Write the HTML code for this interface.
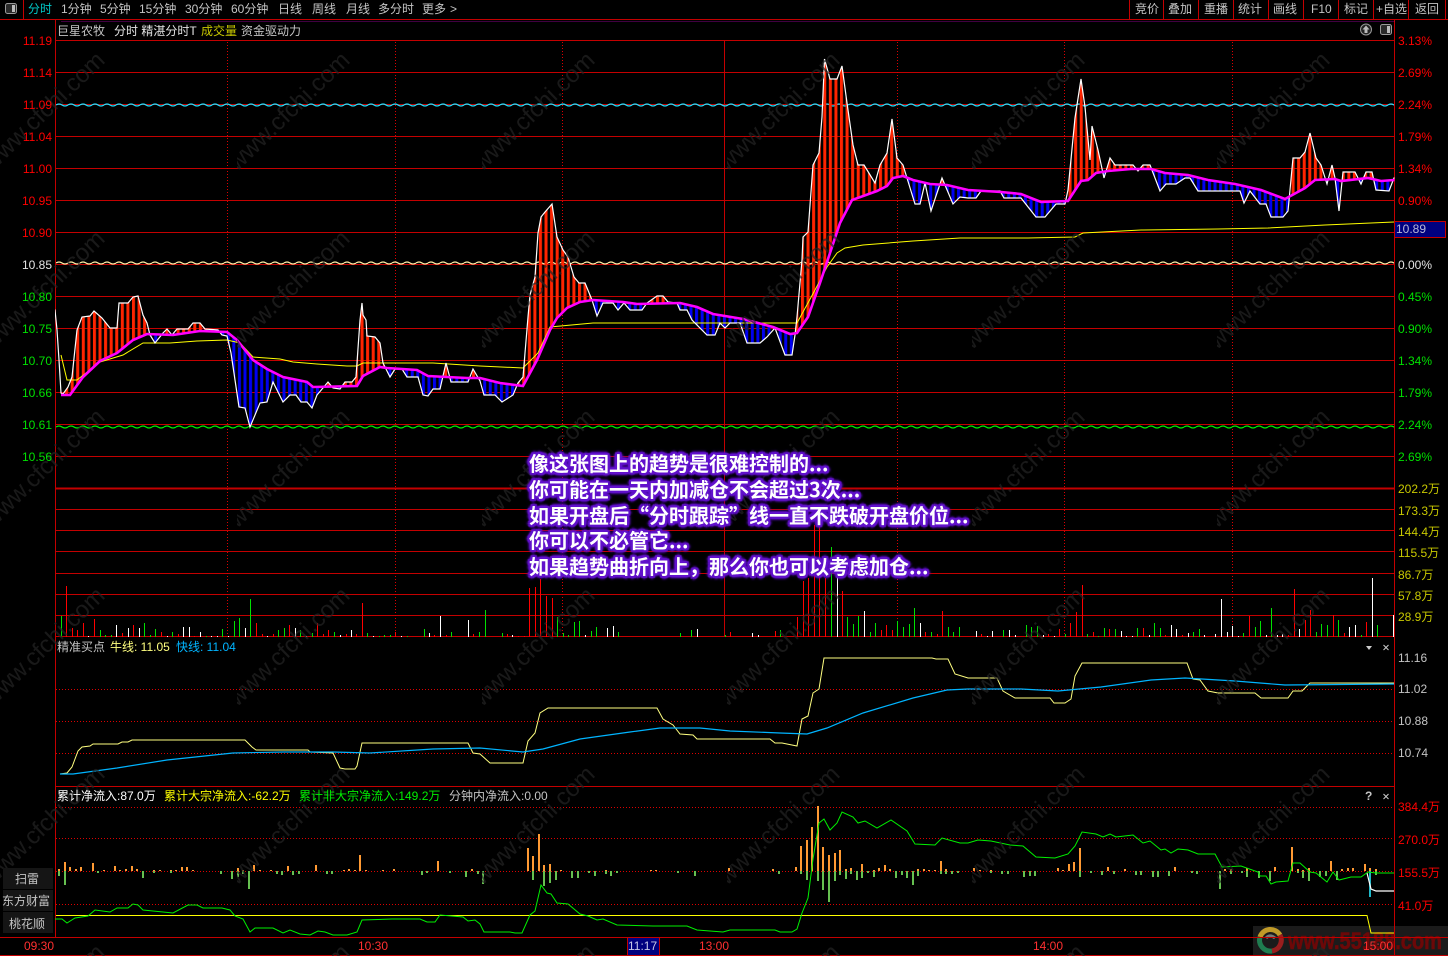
<!DOCTYPE html>
<html lang="zh">
<head>
<meta charset="utf-8">
<title>分时</title>
<style>
html,body{margin:0;padding:0;background:#000;width:1448px;height:956px;overflow:hidden}
svg{position:absolute;left:0;top:0}
text{font-family:"Liberation Sans","WenQuanYi Zen Hei","Noto Sans CJK SC",sans-serif;font-size:12px;white-space:pre}
.g{fill:#c4c4c4}.r{fill:#f00}.gr{fill:#00e000}.y{fill:#c8c800}.w{fill:#e4e4e4}
.ov{position:absolute;left:529px;font:bold 20px/26px "Noto Sans CJK SC","WenQuanYi Zen Hei",sans-serif;color:#fff;white-space:pre;
text-shadow:2px 0 1px #6212cc,-2px 0 1px #6212cc,0 2px 1px #6212cc,0 -2px 1px #6212cc,2px 2px 1px #6212cc,-2px 2px 1px #6212cc,2px -2px 1px #6212cc,-2px -2px 1px #6212cc,3px 0 2px #5a10c0,-3px 0 2px #5a10c0,0 3px 2px #5a10c0,0 -3px 2px #5a10c0,0 0 6px #5a10c0}
</style>
</head>
<body>
<svg width="1448" height="956" viewBox="0 0 1448 956" xmlns="http://www.w3.org/2000/svg">
<defs>
<pattern id="red" patternUnits="userSpaceOnUse" x="59.5" y="0" width="5.575" height="10"><rect width="3" height="10" fill="#ff2400"/></pattern>
<pattern id="blue" patternUnits="userSpaceOnUse" x="59.5" y="0" width="5.575" height="10"><rect width="3" height="10" fill="#0000f0"/></pattern>
<pattern id="wc" patternUnits="userSpaceOnUse" x="56" y="102" width="12" height="6"><path d="M0 3Q3 1 6 3T12 3" fill="none" stroke="#20e0ff" stroke-width="1.3"/></pattern>
<pattern id="wy" patternUnits="userSpaceOnUse" x="56" y="260" width="12" height="6"><path d="M0 3Q3 1 6 3T12 3" fill="none" stroke="#fff0a8" stroke-width="1.3"/></pattern>
<pattern id="wg" patternUnits="userSpaceOnUse" x="56" y="424" width="12" height="6"><path d="M0 3Q3 1 6 3T12 3" fill="none" stroke="#00f000" stroke-width="1.3"/></pattern>
<pattern id="wm" patternUnits="userSpaceOnUse" x="-8" y="-3" width="245" height="178.5">
<text x="0" y="175" transform="rotate(-44 0 175)" style="font-size:24px" fill="#242424">www.cfchi.com</text>
</pattern>
<path id="pP" d="M50 20L50 305L55 310L56 320L57 330L59 360L61 393L63 394L68 387L72 377L77 330L82 317L90 316L94 311L102 318L110 328L117 328L119 303L128 303L133 297L138 296L143 315L147 323L150 335L155 343L163 333L167 329L172 335L177 329L188 329L193 323L200 323L205 329L218 330L222 335L227 336L231 353L239 407L245 408L250 427L260 403L267 402L273 382L283 402L290 395L296 395L301 402L307 402L312 408L317 395L328 382L333 388L340 389L345 382L352 382L356 377L360 320L362 303L363 315L366 320L367 336L375 337L380 343L383 363L390 377L395 369L402 369L407 377L418 377L423 395L428 396L433 389L440 389L446 363L451 382L468 382L473 369L480 381L484 395L495 395L502 402L513 395L518 383L523 377L525 353L528 317L530 295L535 277L538 233L541 217L545 212L552 204L557 237L563 250L568 257L574 277L579 283L585 283L592 300L597 316L603 303L613 303L618 310L624 303L630 310L642 310L647 303L657 296L663 296L668 302L677 303L680 310L687 310L692 320L707 335L715 335L720 323L725 328L730 323L740 323L747 343L760 343L767 337L775 328L785 355L792 355L795 335L797 317L802 260L803 237L808 232L813 165L819 153L822 117L824.5 59L830 79L837 79L842 66L847 103L853 145L858 165L864 165L875 183L880 165L887 153L892 119L897 158L903 165L915 204L920 204L925 183L931 211L942 178L953 204L960 197L968 198L976 198L981 191L1000 191L1004 198L1021 198L1036 217L1045 217L1056 204L1065 204L1068 190L1075 118L1081 79L1085 107L1090 160L1092 126L1098 150L1104 178L1110 158L1115 165L1133 165L1138 171L1143 165L1150 165L1160 191L1166 184L1176 184L1185 178L1190 178L1198 191L1240 191L1244 203L1250 191L1260 204L1266 204L1271 217L1283 217L1288 211L1290 190L1293 158L1300 158L1305 152L1310 133L1316 158L1321 165L1327 184L1332 165L1335 178L1339 211L1343 172L1355 172L1361 184L1366 172L1372 172L1376 190L1389 191L1394 178L1400 178L1400 20Z"/>
<path id="pA" d="M50 20L50 395L61 395L70 395L83 377L100 361L117 353L133 340L147 334L173 335L200 331L227 332L237 340L253 360L267 369L283 377L307 382L313 387L357 386L363 376L380 367L387 368L417 370L428 376L447 377L467 378L480 378L500 383L523 386L537 360L550 330L557 318L567 308L580 302L593 300L623 302L637 304L680 303L697 307L713 314L743 319L773 327L790 334L797 333L808 317L820 283L840 223L852 200L877 191L887 186L893 178L903 176L913 180L930 184L947 185L968 190L1001 192L1021 194L1041 202L1068 201L1081 181L1088 180L1096 173L1108 171L1131 169L1151 169L1165 173L1188 175L1208 180L1235 184L1261 190L1285 199L1305 188L1315 180L1335 179L1341 181L1368 178L1381 181L1394 180L1400 180L1400 20Z"/>
<mask id="aboveP" maskUnits="userSpaceOnUse" x="0" y="0" width="1448" height="956"><use href="#pP" fill="#fff"/></mask>
<mask id="belowP" maskUnits="userSpaceOnUse" x="0" y="0" width="1448" height="956"><rect width="1448" height="956" fill="#fff"/><use href="#pP" fill="#000"/></mask>
<mask id="aboveA" maskUnits="userSpaceOnUse" x="0" y="0" width="1448" height="956"><use href="#pA" fill="#fff"/></mask>
<mask id="belowA" maskUnits="userSpaceOnUse" x="0" y="0" width="1448" height="956"><rect width="1448" height="956" fill="#fff"/><use href="#pA" fill="#000"/></mask>
<clipPath id="cP"><rect x="55" y="21" width="1339.5" height="640"/></clipPath>
<clipPath id="cA"><rect x="61" y="21" width="1333.5" height="640"/></clipPath>
</defs>

<rect width="1448" height="956" fill="#000"/>

<!-- logo backdrop -->
<rect x="1253" y="926" width="195" height="30" fill="#1b1b1b"/>
<text x="1288" y="949" style="font-size:24px;font-weight:bold;font-family:'Liberation Sans',sans-serif" fill="#6c0808" stroke="#6c0808" stroke-width=".6" textLength="154" lengthAdjust="spacingAndGlyphs">www.55188.com</text>
<g fill="none" stroke-width="5">
<path d="M1260 937A11 11 0 0 1 1280 935" stroke="#c09a28"/>
<path d="M1280 935A11 11 0 0 1 1272 951" stroke="#9a1e1e"/>
<path d="M1272 951A11 11 0 0 1 1260 937" stroke="#1f7d50"/>
<path d="M1266 938Q1270 934 1275 938" stroke="#777" stroke-width="3"/>
</g>

<!-- frame and grid -->
<g shape-rendering="crispEdges" fill="none" stroke="#c40000">
<path d="M0 19.5H1448M23.5 0V19M1129.5 0V19M1163.5 0V19M1198.5 0V19M1233.5 0V19M1268.5 0V19M1303.5 0V19M1338.5 0V19M1373.5 0V19M1408.5 0V19M1445.5 0V19"/>
<path d="M55.5 20V937.5M1394.5 20V956M0 937.5H1448M0 955.5H1448M55 786.5H1394"/>
<path d="M56 40.5H1394M56 72.5H1394M56 104.5H1394M56 136.5H1394M56 168.5H1394M56 200.5H1394M56 232.5H1394M56 264.5H1394M56 296.5H1394M56 328.5H1394M56 360.5H1394M56 392.5H1394M56 424.5H1394M56 456.5H1394M56 509.5H1394M56 530.5H1394M56 551.5H1394M56 573.5H1394M56 594.5H1394M56 615.5H1394M56 636.5H1394"/>
<path d="M56 488.5H1394" stroke-width="2"/>
<path d="M724.5 40V637"/>
<path stroke="#dc0000" stroke-dasharray="1 2" d="M227.5 42V636M395.5 42V636M562.5 42V636M897.5 42V636M1064.5 42V636M1232.5 42V636"/>
<path stroke="#dc0000" stroke-dasharray="1 2" d="M56 689.5H1394M56 721.5H1394M56 753.5H1394M56 807.5H1394M56 838.5H1394M56 871.5H1394M56 904.5H1394"/>
</g>
<rect x="56" y="102" width="1338" height="6" fill="url(#wc)"/>
<rect x="56" y="260" width="1338" height="6" fill="url(#wy)"/>
<rect x="56" y="424" width="1338" height="6" fill="url(#wg)"/>

<!-- stripes between price and average -->
<g clip-path="url(#cA)">
<g mask="url(#belowP)"><rect x="55" y="20" width="1340" height="600" fill="url(#red)" mask="url(#aboveA)"/></g>
<g mask="url(#aboveP)"><rect x="55" y="20" width="1340" height="600" fill="url(#blue)" mask="url(#belowA)"/></g>
</g>

<!-- volume bars -->
<g shape-rendering="crispEdges" fill="none" transform="translate(.5 0)">
<path stroke="#f00" d="M66 586V637M72 628V637M77 630V637M83 623V637M94 619V637M122 633V637M133 625V637M161 632V637M178 634V637M194 636V637M256 623V637M262 634V637M273 634V637M289 625V637M317 623V637M323 634V637M328 630V637M346 634V637M356 634V637M362 603V637M395 632V637M434 635V637M446 635V637M473 634V637M507 634V637M518 636V637M524 636V637M529 588V637M535 587V637M540 579V637M546 596V637M552 598V637M730 632V637M775 631V637M797 617V637M803 581V637M808 578V637M814 525V637M819 527V637M825 578V637M842 591V637M881 630V637M886 625V637M892 630V637M925 632V637M937 634V637M942 611V637M981 634V637M1048 634V637M1059 629V637M1070 623V637M1076 612V637M1082 585V637M1093 632V637M1109 629V637M1143 628V637M1165 635V637M1182 635V637M1249 616V637M1288 635V637M1294 589V637M1305 620V637M1310 610V637M1333 615V637M1344 633V637M1366 622V637"/>
<path stroke="#00e000" d="M61 616V637M100 630V637M105 635V637M111 635V637M144 623V637M150 635V637M155 629V637M172 632V637M206 636V637M222 629V637M234 621V637M239 618V637M250 599V637M278 630V637M284 628V637M300 630V637M312 633V637M334 632V637M367 633V637M379 636V637M384 635V637M390 635V637M407 636V637M424 629V637M451 632V637M479 632V637M485 610V637M502 633V637M557 617V637M563 633V637M568 635V637M574 622V637M579 621V637M591 631V637M596 627V637M618 632V637M680 633V637M691 630V637M725 635V637M780 630V637M831 547V637M847 617V637M853 624V637M858 616V637M870 632V637M875 623V637M897 621V637M903 627V637M909 624V637M914 608V637M931 632V637M948 627V637M953 632V637M959 627V637M1003 630V637M1026 625V637M1031 627V637M1037 626V637M1065 634V637M1087 634V637M1098 636V637M1104 628V637M1115 629V637M1137 628V637M1154 623V637M1160 628V637M1193 632V637M1199 629V637M1243 633V637M1255 627V637M1260 621V637M1271 608V637M1316 632V637M1321 624V637M1327 625V637M1338 620V637M1361 635V637M1377 625V637"/>
<path stroke="#fff" d="M88 636V637M116 625V637M128 628V637M139 628V637M167 636V637M183 627V637M189 627V637M200 632V637M211 636V637M217 636V637M228 636V637M245 628V637M267 636V637M295 628V637M306 636V637M340 635V637M351 630V637M373 636V637M401 636V637M429 633V637M440 616V637M468 620V637M512 635V637M585 635V637M607 628V637M613 626V637M697 629V637M752 633V637M758 635V637M837 577V637M864 611V637M920 623V637M976 631V637M987 636V637M992 631V637M1009 630V637M1015 635V637M1043 635V637M1054 636V637M1121 631V637M1126 636V637M1132 636V637M1149 635V637M1171 625V637M1176 629V637M1188 633V637M1204 635V637M1215 634V637M1221 599V637M1227 632V637M1232 626V637M1238 636V637M1266 635V637M1277 635V637M1282 634V637M1299 629V637M1349 627V637M1355 625V637M1372 578V637M1393 615V637"/>
</g>

<!-- average-price (yellow) line -->
<polyline fill="none" stroke="#ffff00" stroke-width="1" points="61,355 67,380 77,380 100,362 123,355 143,343 170,343 197,341 227,340 240,343 253,357 280,359 293,362 317,364 347,366 357,366 363,363 433,363 480,366 523,368 538,353 550,327 593,323 797,323 815,290 827,267 837,253 845,248 863,245 913,241 960,238 1028,238 1075,237 1083,233 1141,230 1218,229 1268,228 1325,225 1394,222"/>
<!-- price and average lines -->
<use href="#pP" fill="none" stroke="#fff" stroke-width="1.2" clip-path="url(#cP)"/>
<use href="#pA" fill="none" stroke="#ff00ff" stroke-width="2.6" clip-path="url(#cA)"/>

<!-- panel 2 -->
<polyline fill="none" stroke="#ffff80" stroke-width="1" points="60,774 67,773 72,767 78,751 82,747 90,746 93,744 118,744 122,742 128,742 132,740 245,740 252,747 256,750 308,750 310,752 333,753 340,768 345,769 355,769 357,766 362,743 468,743 473,753 480,754 490,763 523,763 528,741 535,733 540,713 548,708 657,708 663,719 673,725 680,734 693,735 697,739 770,739 775,743 782,743 797,746 802,719 808,716 813,693 819,689 824,658 932,658 936,659 948,659 955,674 968,678 997,678 1003,691 1015,698 1050,698 1054,703 1065,703 1071,699 1075,676 1082,663 1187,663 1193,679 1200,680 1208,691 1218,693 1255,693 1261,698 1288,698 1293,691 1302,691 1310,683 1394,683"/>
<polyline fill="none" stroke="#00b4ff" stroke-width="1.2" points="60,774 73,774 117,768 167,760 233,753 283,752 333,752 370,753 433,749 480,748 523,752 543,749 580,739 630,732 660,728 700,728 730,731 780,733 807,734 827,728 863,713 913,698 947,690 968,689 1021,689 1058,691 1101,687 1151,680 1185,678 1235,681 1285,685 1394,684"/>

<!-- panel 3 bars -->
<g shape-rendering="crispEdges" fill="none" stroke-width="2">
<path stroke="#ff9a33" d="M59 869V871M65 862V871M70 867V871M76 869V871M81 867V871M93 863V871M104 870V871M115 866V871M120 870V871M126 869V871M132 866V871M137 869V871M154 870V871M160 870V871M171 870V871M176 870V871M182 867V871M187 867V871M193 870V871M238 868V871M243 870V871M254 865V871M260 870V871M271 870V871M288 866V871M316 865V871M344 870V871M349 869V871M355 870V871M360 855V871M366 870V871M383 870V871M394 869V871M438 861V871M472 869V871M528 848V871M533 856V871M539 834V871M544 865V871M550 864V871M561 870V871M606 870V871M651 870V871M656 870V871M729 868V871M773 869V871M796 867V871M801 846V871M807 840V871M812 827V871M818 806V871M823 847V871M829 855V871M835 853V871M840 850V871M846 869V871M851 868V871M862 864V871M874 870V871M879 868V871M885 865V871M890 869V871M918 869V871M924 869V871M929 870V871M935 870V871M941 861V871M946 869V871M974 868V871M980 870V871M991 870V871M1058 868V871M1063 870V871M1069 864V871M1074 862V871M1080 848V871M1108 867V871M1125 869V871M1175 867V871M1225 869V871M1231 869V871M1247 868V871M1275 867V871M1292 847V871M1298 869V871M1303 870V871M1309 868V871M1331 861V871M1342 869V871M1348 868V871M1353 868V871M1365 864V871M1370 868V871M1376 869V871"/>
<path stroke="#66c050" d="M59 871V876M65 871V885M98 871V873M143 871V878M154 871V873M171 871V873M221 871V874M232 871V879M238 871V877M243 871V874M249 871V889M277 871V874M282 871V875M293 871V875M299 871V874M327 871V874M332 871V874M422 871V875M427 871V873M450 871V873M466 871V877M478 871V874M483 871V884M533 871V880M544 871V886M550 871V883M556 871V880M572 871V878M578 871V878M589 871V873M595 871V876M606 871V874M611 871V876M617 871V873M678 871V873M695 871V876M779 871V874M801 871V874M807 871V880M818 871V881M823 871V890M829 871V902M835 871V881M840 871V875M846 871V879M851 871V874M857 871V880M862 871V878M868 871V873M874 871V877M896 871V878M902 871V875M907 871V878M913 871V885M918 871V876M941 871V874M946 871V874M952 871V874M958 871V873M991 871V873M1002 871V874M1008 871V874M1024 871V877M1030 871V876M1035 871V876M1080 871V877M1091 871V873M1102 871V875M1114 871V874M1136 871V875M1141 871V875M1153 871V877M1158 871V877M1169 871V876M1192 871V873M1197 871V874M1220 871V889M1231 871V874M1242 871V873M1247 871V877M1259 871V878M1270 871V881M1298 871V873M1303 871V878M1309 871V881M1320 871V877M1326 871V876M1337 871V880M1376 871V875"/>
<path stroke="#20b8c8" d="M1370 871V897"/>
</g>
<polyline fill="none" stroke="#ffff00" points="56,915.5 1367,915.5 1371,933 1394,933"/>
<polyline fill="none" stroke="#fff" stroke-width="1.2" points="1367,873 1371,889 1376,891 1394,891"/>
<polyline fill="none" stroke="#00f000" stroke-width="1" points="55,919 62,919 67,923 75,918 88,916 95,910 110,912 117,908 128,908 133,904 138,905 143,910 153,911 173,913 188,905 197,905 203,908 222,908 230,910 235,916 243,919 250,932 255,928 273,928 283,933 290,930 300,934 310,935 318,931 325,932 333,935 347,935 357,932 362,920 392,919 420,919 427,922 435,922 440,915 463,917 468,921 475,920 480,924 484,932 510,932 515,933 522,933 530,915 535,911 541,885 547,893 551,894 557,903 568,904 580,914 588,916 597,920 603,919 617,925 653,926 687,926 697,930 723,932 730,930 775,930 780,932 792,932 797,929 802,913 808,898 813,859 819,823 824,819 830,830 837,823 842,812 853,817 858,823 865,821 877,828 891,820 907,831 915,844 935,845 942,838 960,843 968,843 978,840 991,841 1010,845 1023,846 1036,857 1055,858 1068,854 1075,846 1082,832 1096,834 1103,837 1110,834 1116,837 1133,835 1143,843 1150,841 1161,850 1165,849 1171,853 1178,849 1188,850 1198,854 1215,854 1222,867 1241,866 1258,872 1260,876 1266,876 1271,884 1276,882 1288,881 1293,863 1300,863 1310,872 1316,873 1327,882 1333,872 1339,880 1351,877 1361,877 1368,872 1376,873 1394,873"/>

<!-- watermark -->
<rect width="1448" height="956" fill="url(#wm)" opacity=".7"/>

<!-- top bar -->
<rect x="5.5" y="3.5" width="11" height="10" rx="2" fill="#2a2a2a" stroke="#9a9a9a"/>
<rect x="12" y="5" width="3" height="7" fill="#bbb"/>
<text x="28" y="13" fill="#00c8c8">分时</text>
<g class="g">
<text x="61" y="13">1分钟</text><text x="100" y="13">5分钟</text><text x="139" y="13">15分钟</text><text x="185" y="13">30分钟</text><text x="231" y="13">60分钟</text><text x="278" y="13">日线</text><text x="312" y="13">周线</text><text x="346" y="13">月线</text><text x="378" y="13">多分时</text><text x="422" y="13">更多</text><text x="450" y="13">&gt;</text>
<text x="1135" y="13">竞价</text><text x="1168" y="13">叠加</text><text x="1204" y="13">重播</text><text x="1238" y="13">统计</text><text x="1273" y="13">画线</text><text x="1311" y="13">F10</text><text x="1344" y="13">标记</text><text x="1376" y="13">+自选</text><text x="1415" y="13">返回</text>
</g>

<!-- second row -->
<text x="57" y="35" class="g">巨星农牧</text>
<text x="114" y="35" class="w">分时 精湛分时T</text>
<text x="201" y="35" class="y">成交量</text>
<text x="241" y="35" class="g">资金驱动力</text>
<circle cx="1366" cy="29.5" r="5.5" fill="#222" stroke="#999"/><path d="M1366 25.5L1369.5 29.5H1367.5V33H1364.5V29.5H1362.5Z" fill="#bbb"/>
<rect x="1380.5" y="24.5" width="11" height="10" rx="2" fill="#2a2a2a" stroke="#9a9a9a"/><rect x="1387" y="26" width="3" height="7" fill="#bbb"/>

<!-- left price labels -->
<g text-anchor="end">
<g class="r"><text x="52" y="45">11.19</text><text x="52" y="77">11.14</text><text x="52" y="109">11.09</text><text x="52" y="141">11.04</text><text x="52" y="173">11.00</text><text x="52" y="205">10.95</text><text x="52" y="237">10.90</text></g>
<text x="52" y="269" class="w">10.85</text>
<g class="gr"><text x="52" y="301">10.80</text><text x="52" y="333">10.75</text><text x="52" y="365">10.70</text><text x="52" y="397">10.66</text><text x="52" y="429">10.61</text><text x="52" y="461">10.56</text></g>
</g>

<!-- right labels -->
<g class="r"><text x="1398" y="45">3.13%</text><text x="1398" y="77">2.69%</text><text x="1398" y="109">2.24%</text><text x="1398" y="141">1.79%</text><text x="1398" y="173">1.34%</text><text x="1398" y="205">0.90%</text></g>
<text x="1398" y="269" class="w">0.00%</text>
<g class="gr"><text x="1398" y="301">0.45%</text><text x="1398" y="333">0.90%</text><text x="1398" y="365">1.34%</text><text x="1398" y="397">1.79%</text><text x="1398" y="429">2.24%</text><text x="1398" y="461">2.69%</text></g>
<g class="y"><text x="1398" y="493">202.2万</text><text x="1398" y="515">173.3万</text><text x="1398" y="536">144.4万</text><text x="1398" y="557">115.5万</text><text x="1398" y="579">86.7万</text><text x="1398" y="600">57.8万</text><text x="1398" y="621">28.9万</text></g>
<rect x="1394.5" y="221.5" width="51" height="16" fill="#000080" stroke="#c40000"/>
<text x="1396" y="233" fill="#b8b8d8">10.89</text>

<!-- panel 2 labels -->
<text x="57" y="651" class="g">精准买点</text>
<text x="110" y="651" fill="#ffff80">牛线: 11.05</text>
<text x="176" y="651" fill="#00b4ff">快线: 11.04</text>
<path d="M1366 646H1372L1369 650Z" fill="#ccc"/>
<path d="M1383.5 645L1388.5 650M1388.5 645L1383.5 650" stroke="#ccc" fill="none"/>
<g class="g"><text x="1398" y="662">11.16</text><text x="1398" y="693">11.02</text><text x="1398" y="725">10.88</text><text x="1398" y="757">10.74</text></g>

<!-- panel 3 labels -->
<text x="57" y="800" fill="#fff">累计净流入:87.0万</text>
<text x="164" y="800" fill="#ffff00">累计大宗净流入:-62.2万</text>
<text x="299" y="800" fill="#00f000">累计非大宗净流入:149.2万</text>
<text x="449" y="800" class="g">分钟内净流入:0.00</text>
<text x="1365" y="800" class="g" style="font-weight:bold">?</text>
<path d="M1383.5 794L1388.5 799M1388.5 794L1383.5 799" stroke="#ccc" fill="none"/>
<g class="r"><text x="1398" y="811">384.4万</text><text x="1398" y="844">270.0万</text><text x="1398" y="877">155.5万</text><text x="1398" y="910">41.0万</text></g>

<!-- left buttons -->
<rect x="3" y="868" width="50" height="21" fill="#151515"/><rect x="3" y="890" width="50" height="21" fill="#151515"/><rect x="3" y="912" width="50" height="21" fill="#151515"/>
<g class="g" text-anchor="middle"><text x="27" y="883">扫雷</text><text x="26" y="905">东方财富</text><text x="27" y="928">桃花顺</text></g>

<!-- time axis -->
<g fill="#ff3030"><text x="24" y="950">09:30</text><text x="358" y="950">10:30</text><text x="699" y="950">13:00</text><text x="1033" y="950">14:00</text><text x="1363" y="950">15:00</text></g>
<rect x="627.5" y="937.5" width="32" height="18" fill="#000080" stroke="#c40000"/>
<text x="628" y="950" fill="#c8c8e8">11:17</text>
</svg>

<div class="ov" style="top:450px">像这张图上的趋势是很难控制的...</div>
<div class="ov" style="top:476px">你可能在一天内加减仓不会超过3次...</div>
<div class="ov" style="top:502px">如果开盘后“分时跟踪”线一直不跌破开盘价位...</div>
<div class="ov" style="top:527px">你可以不必管它...</div>
<div class="ov" style="top:553px">如果趋势曲折向上，那么你也可以考虑加仓...</div>
</body>
</html>
